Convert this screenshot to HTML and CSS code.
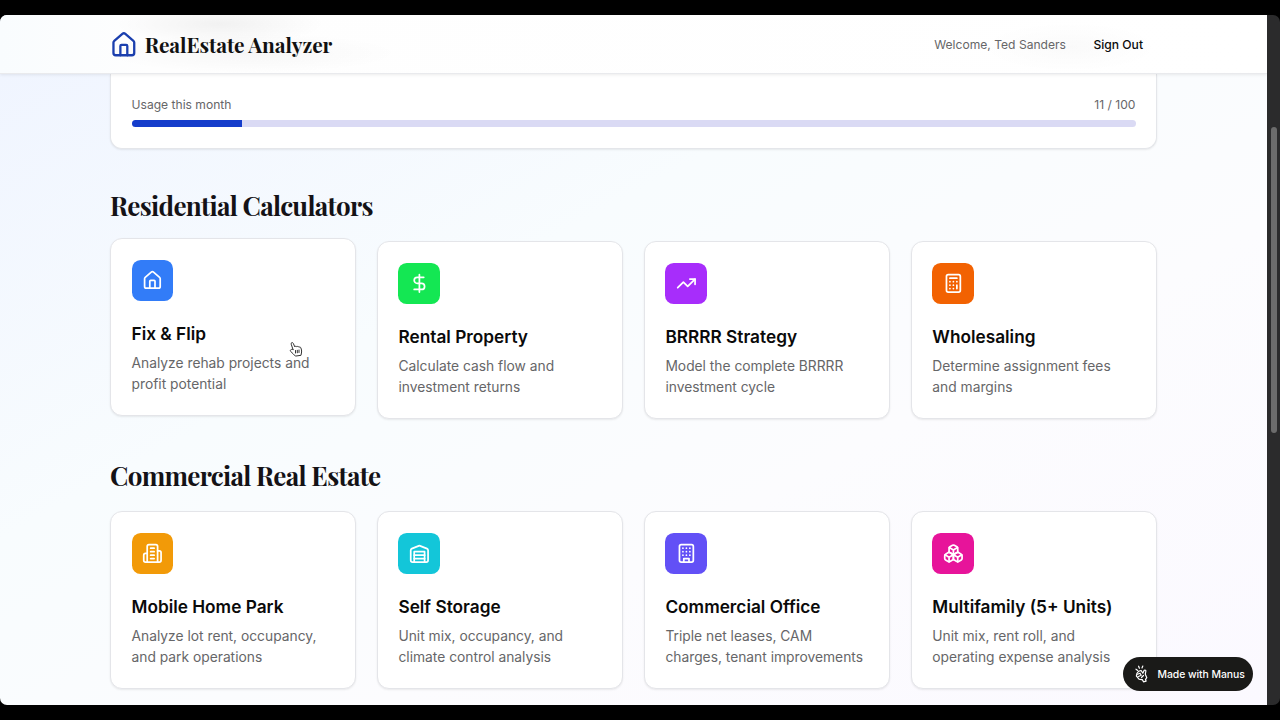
FILE: index.html
```html
<!DOCTYPE html>
<html lang="en">
  <head>
    <meta charset="UTF-8" />
    <title>RealEstate Analyzer</title>
    <link rel="stylesheet" href="styles.css" />
  </head>
  <body>
    <div class="window">
      <div class="page">
        <header class="header">
          <div class="header-haze"></div>
          <div class="brand">
            <svg class="brand-icon" viewBox="0 0 24 24">
              <path d="M15 21v-8a1 1 0 0 0-1-1h-4a1 1 0 0 0-1 1v8" />
              <path d="M3 10a2 2 0 0 1 .709-1.528l7-6a2 2 0 0 1 2.582 0l7 6A2 2 0 0 1 21 10v9a2 2 0 0 1-2 2H5a2 2 0 0 1-2-2z" />
            </svg>
            <span class="brand-name">RealEstate Analyzer</span>
          </div>
          <div class="user">
            <span class="welcome">Welcome, Ted Sanders</span>
            <a class="sign-out">Sign Out</a>
          </div>
        </header>

        <main class="content">
          <section class="usage">
            <div class="usage-row">
              <span>Usage this month</span>
              <span>11 / 100</span>
            </div>
            <div class="progress">
              <div class="progress-fill" style="width: 11%"></div>
            </div>
          </section>

          <section class="group">
            <h2>Residential Calculators</h2>
            <div class="cards">
              <div class="card active">
                <div class="icon blue">
                  <svg viewBox="0 0 24 24">
                    <path d="M15 21v-8a1 1 0 0 0-1-1h-4a1 1 0 0 0-1 1v8" />
                    <path d="M3 10a2 2 0 0 1 .709-1.528l7-6a2 2 0 0 1 2.582 0l7 6A2 2 0 0 1 21 10v9a2 2 0 0 1-2 2H5a2 2 0 0 1-2-2z" />
                  </svg>
                </div>
                <h3>Fix &amp; Flip</h3>
                <p>Analyze rehab projects and profit potential</p>
                <svg class="cursor" viewBox="0 0 14 16">
                  <path d="M4 8.500 2.200 3.200C1.700 1.500 3.600.8 4.300 2.400l1.500 3.500c.4-1 1.700-.9 2.100 0 .5-.8 1.700-.6 2 .3.8-.5 1.800-.1 2 .8.500 1.300.9 2.600.7 4l-.6 3.300-5.600.8C5 13.400 3.400 12.200 1.600 10.400c-1-1.300.9-2.700 2.400-1.900z" />
                  <path d="M6.500 9.500v2.500M8.300 9.300v2.500M10 9v2.500" />
                </svg>
              </div>
              <div class="card">
                <div class="icon green">
                  <svg viewBox="0 0 24 24">
                    <path d="M12 2v20" />
                    <path d="M17 5H9.500a3.500 3.500 0 0 0 0 7h5a3.500 3.500 0 0 1 0 7H6" />
                  </svg>
                </div>
                <h3>Rental Property</h3>
                <p>Calculate cash flow and investment returns</p>
              </div>
              <div class="card">
                <div class="icon purple">
                  <svg viewBox="0 0 24 24">
                    <path d="M22 7l-8.500 8.500-5-5L2 17" />
                    <path d="M16 7h6v6" />
                  </svg>
                </div>
                <h3>BRRRR Strategy</h3>
                <p>Model the complete BRRRR investment cycle</p>
              </div>
              <div class="card">
                <div class="icon orange">
                  <svg viewBox="0 0 24 24">
                    <rect width="16" height="20" x="4" y="2" rx="2" />
                    <path d="M8 6h8M16 14v4M16 10h.01M12 10h.01M8 10h.01M12 14h.01M8 14h.01M12 18h.01M8 18h.01" />
                  </svg>
                </div>
                <h3>Wholesaling</h3>
                <p>Determine assignment fees and margins</p>
              </div>
            </div>
          </section>

          <section class="group">
            <h2>Commercial Real Estate</h2>
            <div class="cards">
              <div class="card">
                <div class="icon amber">
                  <svg viewBox="0 0 24 24">
                    <path d="M6 22V4a2 2 0 0 1 2-2h8a2 2 0 0 1 2 2v18Z" />
                    <path d="M6 12H4a2 2 0 0 0-2 2v6a2 2 0 0 0 2 2h2M18 9h2a2 2 0 0 1 2 2v9a2 2 0 0 1-2 2h-2" />
                    <path d="M10 6h4M10 10h4M10 14h4M10 18h4" />
                  </svg>
                </div>
                <h3>Mobile Home Park</h3>
                <p>Analyze lot rent, occupancy, and park operations</p>
              </div>
              <div class="card">
                <div class="icon cyan">
                  <svg viewBox="0 0 24 24">
                    <path d="M22 8.350V20a2 2 0 0 1-2 2H4a2 2 0 0 1-2-2V8.350A2 2 0 0 1 3.260 6.500l8-3.200a2 2 0 0 1 1.480 0l8 3.200A2 2 0 0 1 22 8.350Z" />
                    <path d="M6 18h12M6 14h12" />
                    <path d="M6 22V10h12v12" />
                  </svg>
                </div>
                <h3>Self Storage</h3>
                <p>Unit mix, occupancy, and climate control analysis</p>
              </div>
              <div class="card">
                <div class="icon indigo">
                  <svg viewBox="0 0 24 24">
                    <rect width="16" height="20" x="4" y="2" rx="2" />
                    <path d="M9 22v-4h6v4" />
                    <path d="M8 6h.01M12 6h.01M16 6h.01M8 10h.01M12 10h.01M16 10h.01M8 14h.01M12 14h.01M16 14h.01" />
                  </svg>
                </div>
                <h3>Commercial Office</h3>
                <p>Triple net leases, CAM charges, tenant improvements</p>
              </div>
              <div class="card">
                <div class="icon pink">
                  <svg viewBox="0 0 24 24">
                    <path d="M2.970 12.920A2 2 0 0 0 2 14.630v3.240a2 2 0 0 0 .97 1.710l3 1.800a2 2 0 0 0 2.060 0L12 19v-5.500l-5-3-4.030 2.420Z" />
                    <path d="m7 16.500-4.740-2.850M7 16.500l5-3M7 16.500v5.170" />
                    <path d="M12 13.500V19l3.970 2.380a2 2 0 0 0 2.060 0l3-1.800a2 2 0 0 0 .97-1.710v-3.240a2 2 0 0 0-.97-1.710L17 10.500l-5 3Z" />
                    <path d="m17 16.500-5-3M17 16.500l4.740-2.850M17 16.500v5.170" />
                    <path d="M7.970 4.420A2 2 0 0 0 7 6.130v4.370l5 3 5-3V6.130a2 2 0 0 0-.97-1.710l-3-1.800a2 2 0 0 0-2.060 0l-3 1.800Z" />
                    <path d="M12 8 7.260 5.150M12 8l4.740-2.850M12 13.500V8" />
                  </svg>
                </div>
                <h3>Multifamily (5+ Units)</h3>
                <p>Unit mix, rent roll, and operating expense analysis</p>
              </div>
            </div>
          </section>
        </main>

        <a class="badge">
          <svg viewBox="0 0 14 18">
            <path d="M1 4.200 2.700 5.400M3.600 1.200l.8 2M7.800 1 7 3" />
            <path d="M2 8.200c1-1.700 2.600-2.700 4.300-2.500l1.500 2.500 1.400-3c1.500-.5 2 .6 1.500 1.800l-.4 2.200 1.500 3.500-1.300 1.600.6 1.900-2.600.6-1.200-2.200c-2.300.2-4-.7-4.700-2.200L1.400 11z" />
            <path d="M2.500 9.200 5 8.200l1.200 2-2.700 1.300M6.500 12.500l2-2" />
          </svg>
          Made with Manus
        </a>
      </div>
      <div class="scrollbar">
        <div class="thumb"></div>
      </div>
    </div>
  </body>
</html>
```
FILE: styles.css
```css
* {
  box-sizing: border-box;
}
body {
  margin: 0;
  padding: 15px 0;
  height: 720px;
  overflow: hidden;
  background: #000;
  font-family: Inter, sans-serif;
}
.window {
  display: flex;
  height: 690px;
  border-radius: 7px;
  overflow: hidden;
}
.page {
  flex: 1;
  position: relative;
  overflow: hidden;
  background: linear-gradient(to bottom right, #eff4ff, #f8fcfe 38%, #fcfcfe 65%, #fbf9ff);
}
.header {
  position: relative;
  z-index: 1;
  display: flex;
  justify-content: space-between;
  align-items: center;
  height: 59px;
  padding: 0 124px 0 110px;
  background: linear-gradient(to right, #f9fcfe, #fefefe 12%, #fff);
  border-bottom: 1px solid #e9eaed;
  box-shadow: 0 1px 3px rgba(0, 0, 0, 0.08);
}
/* card text showing faintly through the frosted header */
.header-haze {
  position: absolute;
  inset: 0;
  background:
    radial-gradient(ellipse 105px 20px at 220px 9px, rgba(0, 0, 0, 0.05), transparent),
    radial-gradient(ellipse 150px 20px at 250px 38px, rgba(0, 0, 0, 0.03), transparent),
    radial-gradient(ellipse 90px 25px at 1070px 32px, rgba(0, 0, 0, 0.02), transparent);
}
.brand,
.user {
  position: relative;
  display: flex;
  align-items: center;
}
.brand {
  gap: 7px;
}
svg {
  fill: none;
  stroke: currentColor;
  stroke-width: 2;
  stroke-linecap: round;
  stroke-linejoin: round;
}
.brand-icon {
  width: 27.7px;
  height: 27.7px;
  margin-top: 1px;
  color: #1b3fae;
}
.brand-name {
  font: bold 20.8px "Playfair Display", "Liberation Serif", serif;
  letter-spacing: -0.1px;
  color: #111;
}
.user {
  gap: 27.5px;
  font-size: 12.1px;
}
.welcome {
  color: #666668;
}
.sign-out {
  color: #0b0b0b;
  font-weight: 500;
}
.content {
  width: 1047px;
  margin-left: 110px;
}
.usage {
  height: 74.5px;
  padding: 22px 20.5px 0;
  background: #fff;
  border: 1px solid #e4e6ea;
  border-top: none;
  border-radius: 0 0 12px 12px;
  box-shadow: 0 1px 2px rgba(0, 0, 0, 0.08);
}
.usage-row {
  display: flex;
  justify-content: space-between;
  margin-bottom: 6px;
  font-size: 12.1px;
  line-height: 18px;
  color: #666668;
}
.progress {
  height: 7px;
  border-radius: 4px;
  background: #dadaf4;
  overflow: hidden;
}
.progress-fill {
  height: 100%;
  background: #153dcb;
}
.group {
  padding-top: 40.5px;
}
h2 {
  margin: 0 0 18px;
  font: bold 26px/34px "Playfair Display", "Liberation Serif", serif;
  letter-spacing: -0.68px;
  color: #141216;
}
.cards {
  display: grid;
  grid-template-columns: repeat(4, 1fr);
  gap: 20.8px;
}
.card {
  position: relative;
  height: 177.5px;
  padding: 20.8px 20.5px;
  background: #fff;
  border: 1px solid #e4e5e9;
  border-radius: 12px;
  box-shadow: 0 1px 2px rgba(0, 0, 0, 0.08);
}
.card.active {
  transform: translateY(-3px);
}
.icon {
  display: flex;
  align-items: center;
  justify-content: center;
  width: 41.6px;
  height: 41.6px;
  margin-bottom: 20.5px;
  border-radius: 8.7px;
  color: #fff;
}
.icon svg {
  width: 20.8px;
  height: 20.8px;
}
.blue {
  background: #327cf8;
}
.green {
  background: #14e753;
}
.purple {
  background: #a72dfb;
}
.orange {
  background: #f26202;
}
.amber {
  background: #f29a08;
}
.cyan {
  background: #13c6d9;
}
.indigo {
  background: #6250f6;
}
.pink {
  background: #e7149a;
}
h3 {
  margin: 0 0 6.9px;
  font-size: 17.25px;
  font-weight: 600;
  line-height: 24.3px;
  color: #0a0a0a;
}
p {
  margin: 0;
  font-size: 13.8px;
  line-height: 20.8px;
  color: #666668;
}
.cursor {
  position: absolute;
  left: 178px;
  top: 102px;
  width: 14px;
  height: 16px;
  fill: #fff;
  stroke: #333;
  stroke-width: 1;
}
.badge {
  position: absolute;
  right: 14px;
  bottom: 14px;
  z-index: 2;
  display: flex;
  align-items: center;
  gap: 8.5px;
  width: 130px;
  height: 34px;
  padding-left: 12px;
  border-radius: 17px;
  background: #1a1a18;
  color: #fff;
  font-size: 10.4px;
  font-weight: 500;
  letter-spacing: -0.05px;
  white-space: nowrap;
}
.badge svg {
  width: 14px;
  height: 18px;
  stroke-width: 1.2;
}
.scrollbar {
  width: 13px;
  padding: 112px 3px 0 4px;
  background: #2b2b2c;
}
.thumb {
  height: 306px;
  border-radius: 3px;
  background: #6c6c6c;
}
```
